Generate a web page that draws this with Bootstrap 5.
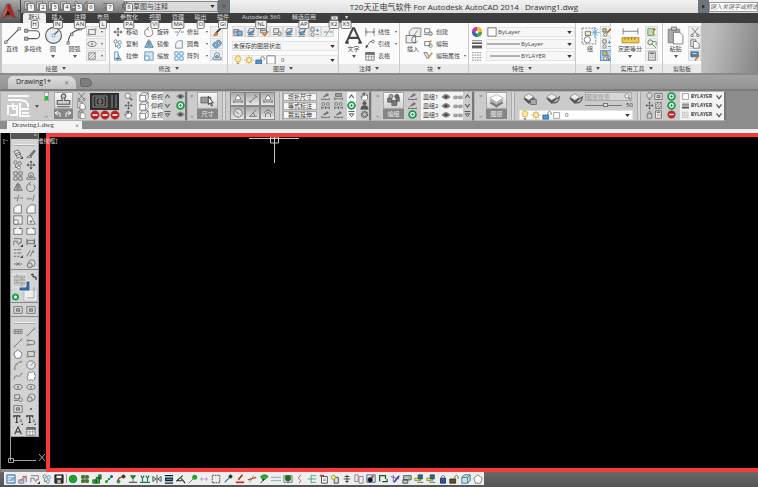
<!DOCTYPE html>
<html lang="zh-CN">
<head>
<meta charset="utf-8">
<meta name="viewport" content="width=device-width, initial-scale=1">
<title>T20天正电气软件 For Autodesk AutoCAD 2014</title>
<link href="https://cdn.jsdelivr.net/npm/bootstrap@5.3.0/dist/css/bootstrap.min.css" rel="stylesheet">
<style>
body{font:6px/8px "Open Sans","Noto Sans CJK SC",sans-serif;color:#444;background:#5a5a5a;overflow:hidden}
button,a.tabx{border:0;background:none;padding:0;margin:0;color:inherit;font:inherit;text-decoration:none;white-space:nowrap}
select,input{font:inherit;color:inherit;border:0;border-radius:0;padding:0;margin:0;background-color:#fff;min-width:0}
select{appearance:none;background:#f6f6f6 url("data:image/svg+xml,%3Csvg xmlns='http://www.w3.org/2000/svg' viewBox='0 0 6 4'%3E%3Cpath d='M0 0h6L3 4z' fill='%23333'/%3E%3C/svg%3E") no-repeat right 2px center/5px 3px}
svg{flex:none;fill:none;stroke:#5c5c5c;stroke-width:.9;display:block}
.ic{width:10px;height:10px}.big{width:19px;height:19px;stroke-width:.7}.mid{width:15px;height:15px}
.caret{width:0;height:0;border:2px solid transparent;border-top:3px solid #555;border-bottom:0;flex:none}
/* title bar */
.topbar{background:#e9e9e9}
.titlebar{height:13px;background:linear-gradient(#f2f2f2,#dedede)}
.quick{width:103px;height:13px;background:linear-gradient(#b4b4b4,#777);padding-left:2px;position:relative;z-index:2}
.quick button{width:12px;height:12px;position:relative;flex:none}
.quick button.wide{width:19px}
.keytip{position:absolute;font-size:6px;line-height:7px;height:9px;padding:0 1px;min-width:8px;text-align:center;color:#333;background:#f4f4f4;border:1px solid #777;border-radius:2px;z-index:3}
.quick .keytip{left:4px;top:3px}
.space{width:94px;height:11px;font-size:7px;line-height:9px;background-color:#dadada;border:1px solid #888}
.applogo{width:21px;height:23px;background:linear-gradient(#aaa,#555);border-right:1px solid #444}
.heading{font-size:8px;line-height:12px;color:#333;white-space:pre}
.findbox{width:49px;height:10px;font-style:italic;border:1px solid #999}
.tabs{height:10px;background:#3e3e3e;color:#ddd;padding-left:2px}
.tabs .tabx{position:relative;height:10px;line-height:9px;text-align:center}
.tabs .tabx.on{background:#f0f0f0;color:#333;border-radius:2px 2px 0 0}
.tabs .keytip{left:50%;top:7px;transform:translateX(-50%)}
.w12{width:12px}.w22{width:22px}.w23{width:23px}.w24{width:24px}.w28{width:28px}.w54{width:54px}.w32{width:32px}
/* ribbon */
.ribbon{height:52px;padding-left:2px;background:linear-gradient(100deg,#c2c2c2 88%,#bdbdbd 93%,#858585);border-bottom:2px solid #8a8a8a}
.panel{height:50px;border-right:1px solid #c9c9c9;background:#fbfbfb;display:flex;flex-direction:column}
.pbody{flex:1;display:flex;padding:3px 2px 0 3px;min-height:0}
.ptitle{height:9px;background:#e9e9e9;display:flex;align-items:center;justify-content:center;gap:4px}
.bigbtn{display:flex;flex-direction:column;align-items:center;gap:1px;height:36px;line-height:7px}
.bigbtn .caret{margin-top:1px}
.stack{display:grid;grid-template-rows:repeat(3,12px);align-content:start}
.tool{display:flex;align-items:center;gap:3px;height:12px}
.tool .caret{margin-left:auto;margin-right:2px}
.caret{transform-origin:center}
.stack .caret{border-width:1px;border-top:2px solid #555;border-bottom:0}
.sq{width:13px;height:11px;background:#efefef;border:1px solid #d9d9d9;display:flex;align-items:center;justify-content:center}
.sq.on{background:#a9cdf0;border-color:#5d9fdc}
.field{height:10px;background:#f6f6f6;display:flex;align-items:center;gap:1px;border:1px solid #e4e4e4}
.field select{height:8px;flex:1;line-height:8px}
.p1{width:108px}.p2{width:118px}.p3{width:111px}.p4{width:61px}.p5{width:69px}.p6{width:107px}.p7{width:35px}.p8{width:52px}.p9{width:39px}
.c20{width:20px}.c21{width:21px}.c23{width:23px}.c30{width:30px}.c31{width:31px}.c33{width:36px}.c34{width:34px}
/* document tabs */
.doctabs{height:16px;background:linear-gradient(#a2a2a2,#939393);padding:1px 0 0 8px;border-bottom:2px solid #7b7b7b}
.doctab{width:68px;height:13px;font-size:7px;line-height:12px;background:linear-gradient(#dedede,#c2c2c2);border-radius:5px 8px 0 0;padding:0 7px 0 8px;color:#222}
.doctab button{color:#777;font-size:6px}
.plus{width:12px;height:9px;background:#7e7e7e;border:1px solid #666;border-radius:2px 6px 4px 3px}
/* classic toolbars */
.bars{height:30px;background:#8c8c8c}
.tgroup{height:30px;background:#cbcbcb;border:1px solid #b4b4b4;border-right:2px solid #777;display:flex;align-items:center;color:#333;padding-left:2px;flex:none}
.g1{width:187px}.g2{width:184px}.g3{width:103px}.g4{width:252px}
.col3{display:grid;grid-template-rows:repeat(3,9px);justify-items:center;align-items:center;height:28px}
.col3 .ic{width:9px;height:9px}
.grab{width:7px;height:28px;display:flex;flex-direction:column;justify-content:space-between;color:#666;font-size:6px;line-height:8px}
.capbox{width:21px;height:28px;text-align:center;display:flex;flex-direction:column}
.capbox .face{height:17px;background:linear-gradient(#fafafa,#d2d2d2);border:1px solid #aaa;display:flex;justify-content:center;align-items:center}
.capbox .cap{height:10px;line-height:9px;background:#858585;color:#eee;display:flex;justify-content:center;align-items:center}
.list{background:#f3f3f3;height:28px;display:grid;grid-template-rows:repeat(3,9px);align-items:center}
.list .li{display:flex;gap:2px;align-items:center;height:9px;padding-left:2px}
.sep{width:4px;height:28px;border-left:1px solid #aaa;border-right:1px solid #aaa;background:#d8d8d8}
.dimgrid{display:grid;grid-template-columns:repeat(3,15px);grid-template-rows:14px 14px}
.dimgrid button{background:linear-gradient(#aaa,#e8e8e8);border:1px solid #888;display:flex;align-items:center;justify-content:center}
.wordbtn{width:34px;height:8px;background:#f6f6f6;border:1px solid #aaa;line-height:6px}
.panelblack{width:29px;height:17px;background:#303030;stroke:#999}
.brand{width:24px;height:24px;stroke:#fafafa;stroke-width:2}
.rewind{width:18px;height:8px;stroke:#fff}
.mono{font:bold 5px/8px "Liberation Mono",monospace}
.search{width:47px;height:9px;background:#d6d6d6;border:1px solid #aaa;color:#888}
.search input{width:34px;height:7px;background:transparent}
.search input::placeholder{color:#999;opacity:1}
.findbox::placeholder{color:#666;opacity:1}
input[type=range]{width:37px;height:6px;appearance:none;background:linear-gradient(#777,#777) center/100% 1px no-repeat}
input[type=range]::-webkit-slider-thumb{appearance:none;width:5px;height:4px;background:#ddd;border:1px solid #777}
.strip{height:12px;background:linear-gradient(#8c8c8c 66%,#e8e8e8 66%,#f8f8f8);padding-left:7px}
.strip .sheet{width:75px;height:10px;background:#f3f3f3;color:#333;font:7px/9px "Liberation Serif",serif;padding:0 3px 0 5px}
/* drawing area */
.work{background:#000;border-left:1px solid #777;position:relative;min-height:0}
.side{width:45px;border-bottom:3px solid #8a8a8a}
.frame{border:4px solid #f93a3a;border-right:0;min-width:0}
.viewlabel{position:absolute;left:2px;top:4px;color:#ddd;white-space:nowrap;line-height:9px;gap:29px}
.palette{position:relative;z-index:2;width:29px;margin-left:9px;background:#d3d3d3;border:1px solid #999;border-top:0}
.palhead{height:6px;background:#555;color:#ddd;text-align:right;line-height:5px;padding-right:1px}
.grip{height:9px;padding-top:5px}
.grip i{display:block;height:2px;border-top:1px solid #eee;border-bottom:1px solid #aaa;margin:0 3px}
.pgrid{display:grid;grid-template-columns:13px 13px;grid-auto-rows:11px;justify-content:center;align-items:center;justify-items:center}
.swatch{height:34px;border-top:1px solid #888;border-bottom:1px solid #888}
.modes{height:14px;border-bottom:1px solid #888;padding-top:1px}
.ucs{width:38px;height:30px;margin-left:7px;stroke:#ccc}
.cross{width:52px;height:28px;margin-left:199px;stroke:#ddd}
/* bottom toolbar */
.foot{height:15px;background:linear-gradient(#686868,#555);padding:0 0 2px 4px}
.footbar{background:#eee;height:13px;width:480px;padding-left:1px}
.footbar button{width:12px;height:12px;display:flex;justify-content:center;align-items:center}
.footbar .fsep{width:2px;height:9px;border-left:1px solid #999;margin:0 0 0 1px}
</style>
<script src="https://cdn.jsdelivr.net/npm/bootstrap@5.3.0/dist/js/bootstrap.bundle.min.js"></script>
</head>
<body class="d-flex flex-column vh-100 m-0">
<svg width="0" height="0" class="position-absolute" aria-hidden="true">
<defs>
<symbol id="line" viewBox="0 0 12 12"><path d="M2 10 10 2"/><path d="M1 9.500h1.500v1.500H1zM9.500 1H11v1.500H9.500z" fill="#fff" stroke-width=".5"/></symbol>
<symbol id="pline" viewBox="0 0 12 12"><path d="M2 3h6a2.500 2.500 0 0 1 0 5H3"/><path d="M1 2h2v2H1zM1 7h2v2H1z" fill="#bbb" stroke-width=".5"/></symbol>
<symbol id="circle" viewBox="0 0 12 12"><circle cx="6" cy="6" r="5" fill="#e6e9ee"/><path d="m6 6 3-3"/><path d="M5.200 5.200h1.600v1.600H5.200z" fill="#fff" stroke="#39c" stroke-width=".4"/></symbol>
<symbol id="arc" viewBox="0 0 12 12"><path d="M2 11c0-5 3-8 8-9"/><path d="M1.200 10h1.600v1.600H1.200zM3.500 4.500h1.600v1.600H3.500zM9 1h1.600v1.600H9z" fill="#ccc" stroke-width=".4"/></symbol>
<symbol id="rect" viewBox="0 0 12 12"><path d="M2 3h8v6H2z"/><path d="M1 8h2v2H1zM9 2h2v2H9z" fill="#ddd" stroke-width=".5"/></symbol>
<symbol id="ell" viewBox="0 0 12 12"><ellipse cx="6" cy="6" rx="5" ry="3"/><path d="M6 5v3M5 6h2"/></symbol>
<symbol id="hatch" viewBox="0 0 12 12"><path d="M2 2h8v8H2zM2 6l4-4M2 10l8-8M6 10l4-4" stroke-width=".7"/></symbol>
<symbol id="move" viewBox="0 0 12 12"><path d="M6 1v10M1 6h10"/><path d="m4 3 2-2 2 2zM4 9l2 2 2-2zM3 4 1 6l2 2zM9 4l2 2-2 2z" fill="#444" stroke="none"/></symbol>
<symbol id="copy" viewBox="0 0 12 12"><circle cx="3" cy="3" r="2"/><circle cx="8" cy="4" r="2" stroke="#38a"/><circle cx="7" cy="9" r="2" stroke="#38a"/><path d="M3 6v3h2"/></symbol>
<symbol id="copyg" viewBox="0 0 12 12"><circle cx="3" cy="3" r="2"/><circle cx="8" cy="4" r="2"/><circle cx="7" cy="9" r="2" fill="#eee"/><path d="M3 6v3h2"/></symbol>
<symbol id="stretch" viewBox="0 0 12 12"><path d="M2 1h4v10H2zM6 4l4 7H6" stroke="#2b7ab8"/><path d="M3 9h5" stroke-width="1.500"/></symbol>
<symbol id="stretchg" viewBox="0 0 12 12"><path d="M2 1h4l5 10H2z" fill="#f5f5f5"/><path d="M4 8h4M6 6v4"/></symbol>
<symbol id="rotate" viewBox="0 0 12 12"><path d="M4 2a5 5 0 1 0 5 1M6 0 3.500 2 6 4"/></symbol>
<symbol id="mirror" viewBox="0 0 12 12"><path d="M5 2v8H1zM7 2v8h4z" fill="#9cf" stroke="#367"/><path d="M6 0v12" stroke-width=".6"/></symbol>
<symbol id="mirrorg" viewBox="0 0 12 12"><path d="M5 2v8H1zM7 2v8h4z" fill="#bbb"/><path d="M6 0v12" stroke-width=".6"/></symbol>
<symbol id="scale" viewBox="0 0 12 12"><path d="M1 1h10v10H1z" fill="#cfe4f6" stroke="#48a"/><path d="M1 6h5v5H1z" fill="#fff" stroke="#48a"/></symbol>
<symbol id="scaleg" viewBox="0 0 12 12"><path d="M1 1h10v10H1z" fill="#e8e8e8"/><path d="M1 6h5v5H1z" fill="#fff"/></symbol>
<symbol id="trim" viewBox="0 0 12 12"><path d="M1 6h4M8 6h4" stroke-width=".8"/><path d="M9 1 3 11" stroke="#3a8fd0"/></symbol>
<symbol id="trimg" viewBox="0 0 12 12"><path d="M1 6h4M8 6h4M7 2 5 10"/></symbol>
<symbol id="fillet" viewBox="0 0 12 12"><path d="M2 11V7c0-4 3-5 8-5v9z" fill="#f3f6fa" stroke="#579"/></symbol>
<symbol id="filletg" viewBox="0 0 12 12"><path d="M1 11V7c0-4 3-6 9-6v10z" fill="#f6f6f6"/></symbol>
<symbol id="array" viewBox="0 0 12 12"><path d="M1 1h4v4H1zM7 1h4v4H7zM1 7h4v4H1zM7 7h4v4H7z" stroke="#2b7fc0"/></symbol>
<symbol id="arrayg" viewBox="0 0 12 12"><path d="M1 1h4v4H1zM7 1h4v4H7zM1 7h4v4H1zM7 7h4v4H7z"/></symbol>
<symbol id="brush" viewBox="0 0 12 12"><path d="m11 1-6 6" stroke="#333" stroke-width="2"/><path d="M5 6 2 10h4l1-2z" fill="#e78a2a" stroke="#a52"/></symbol>
<symbol id="blob" viewBox="0 0 12 12"><path d="M1 7c0-3 3-2 4-4s5-2 6 1-2 4-4 6-6 0-6-3z" fill="#7cb9ea" stroke="#2d77b5"/><circle cx="4.500" cy="7" r="1.500" fill="#fff"/><circle cx="8" cy="5" r="1.500" fill="#fff"/></symbol>
<symbol id="offset" viewBox="0 0 12 12"><path d="M1 10h10V8c-2 0-2-1-2-3a3 3 0 0 0-6 0c0 2 0 3-2 3z" stroke="#2d77b5"/><path d="M4 8c1-4 3-4 4 0z" fill="#aaa"/></symbol>
<symbol id="offsetg" viewBox="0 0 12 12"><path d="M1 10h10V8c-2 0-2-1-2-3a3 3 0 0 0-6 0c0 2 0 3-2 3z"/><path d="M4 8c1-4 3-4 4 0z" fill="#aaa"/></symbol>
<symbol id="layer" viewBox="0 0 12 12"><path d="M4 2h6l-2 5H2zM3 9h7M2 11h7" fill="#eee"/><path d="m4 6 6-2-1 3-6 2z" fill="#4a9ad4" stroke="#368" stroke-width=".5"/></symbol>
<symbol id="layer2" viewBox="0 0 12 12"><path d="M1 3h6v7H1zM1 5h6M1 7h6" fill="#eee"/><path d="M5 5h6v5H5z" fill="#77b3df" stroke="#368"/></symbol>
<symbol id="layer3" viewBox="0 0 12 12"><path d="M2 2h7v5H2zM2 4h7" fill="#ddd"/><path d="m4 8 3 2 4-5" stroke="#d9772e" stroke-width="2"/></symbol>
<symbol id="bulb" viewBox="0 0 12 12"><path d="M4 8C1 5 3 1 6 1s5 4 2 7z" fill="#ffe88a" stroke="#a88a30" stroke-width=".7"/><path d="M4.500 10h3M5 11.500h2"/></symbol>
<symbol id="bulbg" viewBox="0 0 12 12"><path d="M4 8C1 5 3 1 6 1s5 4 2 7z" fill="#ddd"/><path d="M4.500 10h3"/></symbol>
<symbol id="sun" viewBox="0 0 12 12"><path d="M6 0v12M0 6h12M2 2l8 8M10 2l-8 8" stroke="#e3a02f" stroke-width=".8"/><circle cx="6" cy="6" r="3" fill="#fff2a8" stroke="#a87a20" stroke-width=".7"/></symbol>
<symbol id="unlock" viewBox="0 0 12 12"><path d="M1 6h7v5H1z" fill="#4f97cf" stroke="#27618f"/><path d="M7 6V3q2-3 4 0v3"/></symbol>
<symbol id="unlocky" viewBox="0 0 12 12"><path d="M1 6h7v5H1z" fill="#5b5520" stroke="#221"/><path d="M7 6V3q2-3 4 0v3" stroke="#553"/></symbol>
<symbol id="lock" viewBox="0 0 12 12"><path d="M3 5h6v6H3z" fill="#2456b0" stroke="#123"/><path d="M4 5V3q2-3 4 0v2"/></symbol>
<symbol id="lockg" viewBox="0 0 12 12"><path d="M3 5h6v6H3z" fill="#ccc"/><path d="M4 5V3q2-3 4 0v2"/></symbol>
<symbol id="white" viewBox="0 0 12 12"><path d="M1 1h10v10H1z" fill="#fff"/></symbol>
<symbol id="lettera" viewBox="0 0 16 16"><path d="M2 14 7.500 2h1L14 14M4 10h8M1 14h3M12 14h3" stroke-width="1.700" stroke="#444"/></symbol>
<symbol id="dim" viewBox="0 0 12 12"><path d="M1 1v10M11 1v10M1 6h10M3 4.500 1 6l2 1.500M9 4.500 11 6 9 7.500" stroke-width=".8"/></symbol>
<symbol id="leader" viewBox="0 0 12 12"><path d="m1 11 5-8h2" /><circle cx="9.500" cy="3" r="1.700"/><path d="m1 11 0-4 3 2z" fill="#444" stroke="none"/></symbol>
<symbol id="table" viewBox="0 0 12 12"><path d="M1 2h10v9H1z" fill="#fff"/><path d="M1 2h10v2H1z" fill="#678"/><path d="M1 7h10M4.500 4v7M8 4v7" stroke-width=".6"/></symbol>
<symbol id="insert" viewBox="0 0 18 18"><path d="M2 9h9v7H2zM5 9V5l3-3h8v8h-5" fill="#eee"/><path d="M11 10a3 3 0 1 0 2 4"/><path d="m13 4-5 7" stroke="#37a"/></symbol>
<symbol id="blk" viewBox="0 0 12 12"><path d="M2 2h6v5H2zM1 9h5"/><circle cx="9" cy="8" r="2.200" fill="#d5dde4"/></symbol>
<symbol id="blk2" viewBox="0 0 12 12"><path d="M2 3h6v5H2z"/><circle cx="9" cy="8" r="2"/><path d="m8 4 2-2" stroke="#e59a20" stroke-width="2"/></symbol>
<symbol id="blk3" viewBox="0 0 12 12"><path d="M1 2h4l2 5-2 2z" fill="#eee"/><path d="m6 9 5-7" stroke="#c8a05d" stroke-width="2"/></symbol>
<symbol id="wheel" viewBox="0 0 12 12"><g stroke="none"><circle cx="6" cy="6" r="6" fill="#d33"/><path d="M6 6 6 0A6 6 0 0 1 12 6z" fill="#f3c022"/><path d="M6 6h6a6 6 0 0 1-6 6z" fill="#4a4"/><path d="M6 6v6A6 6 0 0 1 0 6z" fill="#36c"/><path d="M6 6H0A6 6 0 0 1 6 0z" fill="#c3b"/><circle cx="6" cy="6" r="1.800" fill="#fff"/></g></symbol>
<symbol id="weights" viewBox="0 0 12 12"><path d="M0 2h12"/><path d="M0 5h12" stroke-width="2"/><path d="M0 9.500h12" stroke-width="3.500"/></symbol>
<symbol id="dashes" viewBox="0 0 12 12"><path d="M0 2h12M0 5h12M0 8h12M0 11h12" stroke-dasharray="2 1" stroke-width=".8"/></symbol>
<symbol id="group" viewBox="0 0 18 18"><path d="M1 2h13v15H1z" stroke-dasharray="2 1"/><path d="M4 5h5v4H4z" fill="#e3edaa"/><circle cx="6" cy="13" r="3" fill="#fff"/><path d="M13 1v10M9 6h9M10 3l6 6M16 3l-6 6" stroke="#4aa5dd"/></symbol>
<symbol id="gedit" viewBox="0 0 12 12"><path d="M1 2h4v4H1z" fill="#bcd970"/><circle cx="4" cy="9" r="2"/><path d="m6 7 5-5" stroke="#b5651d" stroke-width="2"/></symbol>
<symbol id="ungroup" viewBox="0 0 12 12"><path d="M1 1h4v4H1z"/><circle cx="3" cy="9" r="2"/><path d="M9 2v4M7 4h4M7 9h4" stroke="#38b"/></symbol>
<symbol id="gsel" viewBox="0 0 12 12"><path d="M1 1h5v4H1z" fill="#e3d44c"/><circle cx="4" cy="9" r="2" fill="#fff"/><path d="m7 5 4 4-2 .4L8 11z" fill="#fff"/></symbol>
<symbol id="measure" viewBox="0 0 18 18"><path d="M2 2v6M16 2v6M2 5h14"/><path d="M1 11h16v5H1z" fill="#f3c747" stroke="#a17a16"/><path d="M4 11v2M7 11v2M10 11v2M13 11v2" stroke-width=".7"/></symbol>
<symbol id="pick" viewBox="0 0 12 12"><path d="M1 2h7v8H1z" fill="#bfe3b3" stroke="#3b8a3b"/><path d="m5 5 5 5M9 1v4M7 3h4" stroke="#c63"/></symbol>
<symbol id="filter" viewBox="0 0 12 12"><circle cx="4" cy="4" r="3" fill="#d9ecd0"/><path d="m6 6 5 5M7 3h4v5" stroke="#3a8a3a"/></symbol>
<symbol id="calc" viewBox="0 0 12 12"><path d="M2 1h8v10H2z" fill="#eee"/><path d="M3.500 3h5" stroke-width="1.500"/><path d="M4 6h5M4 8h5" stroke-dasharray="1 1"/></symbol>
<symbol id="paste" viewBox="0 0 18 18"><path d="M2 3h11v13H2z" fill="#aaa" stroke="#777"/><path d="M5 1h5v3H5z" fill="#ccc"/><path d="M7 6h6l3 3v8H7z" fill="#fff"/></symbol>
<symbol id="cut" viewBox="0 0 12 12"><path d="m2 1 7 8M10 1 3 9"/><circle cx="2.500" cy="10" r="1.500"/><circle cx="9.500" cy="10" r="1.500"/></symbol>
<symbol id="copy2" viewBox="0 0 12 12"><path d="M1 1h6v8H1z" fill="#eee"/><path d="M4 3h4l3 3v5H4z" fill="#fff"/></symbol>
<symbol id="match" viewBox="0 0 12 12"><path d="M1 1h9v6H1z" fill="#3f86c3"/><path d="M3 3h5" stroke="#fff"/><path d="m11 5-5 6" stroke="#c7792b" stroke-width="2"/></symbol>
<symbol id="doc" viewBox="0 0 12 12"><path d="M2 1h7v9H2z" fill="#eee"/><path d="M4 3h7v8H4z" fill="#ddd"/></symbol>
<symbol id="sheets" viewBox="0 0 12 12"><path d="m1 3 5-2 3 5-5 2zM3 6l5-2 2 5-5 2z" fill="#ddd"/><path d="M12 9v3H9z" fill="#222"/></symbol>
<symbol id="eye" viewBox="0 0 12 12"><path d="M1 6q5-6 10 0-5 5-10 0z" fill="#888" stroke="#777"/><circle cx="6" cy="6" r="1.600" fill="#333"/></symbol>
<symbol id="go" viewBox="0 0 12 12"><circle cx="6" cy="6" r="4.500" fill="#fff" stroke="#1d9a4c" stroke-width="2.500"/><path d="M6 4v4M4 6h4" stroke="#0d7836"/></symbol>
<symbol id="stop" viewBox="0 0 12 12"><circle cx="6" cy="6" r="5" fill="#c51919" stroke="#a05050"/><path d="M3 6h6" stroke="#fff" stroke-width="2"/></symbol>
<symbol id="stamp" viewBox="0 0 12 12"><circle cx="6" cy="2.500" r="1.800" fill="#ccc"/><path d="M5 4v2H1v3h10V6H7V4M1 11h10" fill="#ccc"/></symbol>
<symbol id="cube" viewBox="0 0 12 12"><path d="m1 4 3-3h7v7l-3 3H1z" fill="#fff"/><path d="M1 4h7v7M8 4l3-3" /></symbol>
<symbol id="cubeb" viewBox="0 0 12 12"><path d="m1 4 3-3h7v7l-3 3H1z" fill="#bfe8ee" stroke="#356"/><path d="M1 4h7v7M8 4l3-3" stroke="#356"/></symbol>
<symbol id="up" viewBox="0 0 12 12"><path d="m3 8 3-4 3 4" stroke-width="1.500"/></symbol>
<symbol id="down" viewBox="0 0 12 12"><path d="m3 4 3 4 3-4" stroke-width="1.500"/></symbol>
<symbol id="more" viewBox="0 0 12 12"><path d="M2 2h8M3 5h6L6 9z" stroke-width="1.300"/></symbol>
<symbol id="zoom" viewBox="0 0 12 12"><circle cx="5" cy="5" r="3.500" fill="#eee"/><path d="m8 8 3 3" stroke-width="2"/></symbol>
<symbol id="hand" viewBox="0 0 12 12"><path d="M3 10 1 6l2 1V2h1.500v3V1H6v4-3h2v3l2-1v5l-2 2H4z" fill="#fff"/></symbol>
<symbol id="cursor" viewBox="0 0 18 14"><path d="M1 3h12v7H1z" fill="#999"/><path d="m10 2 6 8-3-.3L15 13l-1.500.500L12 10l-2 2z" fill="#fff" stroke="#222"/></symbol>
<symbol id="stack" viewBox="0 0 18 18"><path d="m1 12 8-4 8 4-8 5z" fill="#777" stroke="#888"/><path d="m1 9 8-4 8 4-8 5z" fill="#bbb" stroke="#999"/><path d="m1 6 8-4 8 4-8 5z" fill="#fff" stroke="#aaa"/></symbol>
<symbol id="stk2" viewBox="0 0 18 18"><path d="m1 8 6-4 6 4-6 6z" fill="#555"/><path d="m1 6 6-4 6 4-6 4z" fill="#eee" stroke="#888"/><path d="M9 9h7v6H9z" fill="#aaa"/><path d="M11 9V7h3v2"/></symbol>
<symbol id="stk3" viewBox="0 0 18 18"><path d="m1 8 6-4 6 4-6 6z" fill="#555"/><path d="m1 6 6-4 6 4-6 4z" fill="#eee" stroke="#888"/><path d="M8 13q7 1 8-7l-3 2" stroke-width="1.500"/></symbol>
<symbol id="blocks" viewBox="0 0 18 18"><path d="M2 6h5v5H2zM7 9h6v6H7zM12 5h4v5h-4z" fill="#777"/><circle cx="6" cy="4" r="2.500" fill="#aaa"/><circle cx="13" cy="4" r="2.500" fill="#666"/></symbol>
<symbol id="dimA" viewBox="0 0 12 12"><path d="M1 7v4M11 7v4M1 9.500h10"/><path d="M3 7V5l3-4 3 4v2z" fill="#fff"/></symbol>
<symbol id="dimB" viewBox="0 0 12 12"><path d="m2 10 8-7M1 8l3 3M8 1l3 3"/></symbol>
<symbol id="dimC" viewBox="0 0 12 12"><circle cx="6" cy="6" r="5" fill="#ddd"/><path d="m3 4 4 3"/></symbol>
<symbol id="dimD" viewBox="0 0 12 12"><path d="M10 2 2 10h9M6 6q2 1 2 4"/></symbol>
<symbol id="dimE" viewBox="0 0 12 12"><path d="M1 6q5-7 10 0M3 11V7q3-3 6 0v4"/></symbol>
<symbol id="tl1" viewBox="0 0 12 12"><path d="M1 10h10M1 8v3M6 9v2M11 8v3M3 7l5-5 2 2z" fill="#777"/></symbol>
<symbol id="tl2" viewBox="0 0 12 12"><path d="M2 2h8v4H2zM0 9h12M1 7v4M11 7v4" fill="#999"/></symbol>
<symbol id="tl3" viewBox="0 0 12 12"><circle cx="3" cy="4" r="2" fill="#ccc"/><circle cx="9" cy="4" r="2" fill="#ccc"/><path d="M0 9h12M1 7v4M6 7v4M11 7v4"/></symbol>
<symbol id="man" viewBox="0 0 12 12"><circle cx="6" cy="3" r="2.200" fill="#555"/><path d="M1 11q0-5 5-5t5 5z" fill="#555"/></symbol>
<symbol id="gear" viewBox="0 0 12 12"><circle cx="6" cy="6" r="4" stroke-width="2" stroke-dasharray="2 1"/><circle cx="6" cy="6" r="2.500" fill="#ccc"/></symbol>
<symbol id="erase" viewBox="0 0 12 12"><path d="m10 1-6 7 2 1 5-6z" fill="#777"/><path d="M1 10h6l-3-2z" fill="#fff"/></symbol>
<symbol id="chamf" viewBox="0 0 12 12"><path d="M1 11V6l4-5h6v10z" fill="#f5f5f5"/></symbol>
<symbol id="extend" viewBox="0 0 12 12"><path d="M1 7h6M10 2 8 10"/></symbol>
<symbol id="brk" viewBox="0 0 12 12"><path d="M1 3h10v7H1z" fill="#f5f5f5"/><path d="M4 3h3" stroke="#fff"/><path d="M9 2v2"/></symbol>
<symbol id="flag" viewBox="0 0 12 12"><path d="M1 2h9v5H7v3M1 10V5h4v3"/><path d="M12 9v3H9z" fill="#111"/></symbol>
<symbol id="flag2" viewBox="0 0 12 12"><path d="M1 2v8M2 4h8v4H2zM10 2v7"/><path d="M12 9v3H9z" fill="#111"/></symbol>
<symbol id="bars3" viewBox="0 0 12 12"><path d="M1 2h3M5 2h5M1 6h3M5 6h5M1 10h3M5 10h3"/><path d="M12 9v3H9z" fill="#111"/></symbol>
<symbol id="para" viewBox="0 0 12 12"><path d="m1 10 4-7M5 10l4-8M7 5h3"/></symbol>
<symbol id="join" viewBox="0 0 12 12"><path d="M1 6h10M4 4l2 2-2 2M8 4 6 6l2 2" stroke-width=".8"/></symbol>
<symbol id="hat" viewBox="0 0 12 12"><path d="M1 3h10v5H1zM1 5.500h10M3 3v5M5 3v5M7 3v5M9 3v5" stroke-width=".6"/></symbol>
<symbol id="penta" viewBox="0 0 12 12"><path d="m6 1 5 4-2 6H3L1 5z" fill="#fff"/></symbol>
<symbol id="cloud" viewBox="0 0 12 12"><path d="M3 5a2 2 0 1 1 3-3 2 2 0 1 1 4 2 2 2 0 1 1 0 4 2 2 0 1 1-4 2 2 2 0 1 1-4-2q-2-2 1-3z" fill="#fff"/></symbol>
<symbol id="ring" viewBox="0 0 12 12"><circle cx="7" cy="5" r="4" fill="#ddd"/><circle cx="4.500" cy="7.500" r="3" fill="#ccc"/></symbol>
<symbol id="spline" viewBox="0 0 12 12"><path d="M1 10C4 0 6 12 11 2"/></symbol>
<symbol id="dot" viewBox="0 0 12 12"><circle cx="6" cy="6" r=".8" fill="#333"/></symbol>
<symbol id="tt" viewBox="0 0 12 12"><path d="M1 3V1h7v2M4.500 1v8M3 9h3" stroke="#333" stroke-width="1.400"/><path d="M8 6h3M8 8h3M12 10v2h-2z" fill="#222"/></symbol>
<symbol id="aa" viewBox="0 0 12 12"><path d="m2 10 4-9 4 9M3.500 7h5" stroke="#444" stroke-width="1.400"/></symbol>
<symbol id="hframe" viewBox="0 0 12 12"><path d="M1 2h10v8H1z" fill="#ddd"/><path d="M4 4.500h4v3H4z" fill="#aaa"/></symbol>
<symbol id="gball" viewBox="0 0 12 12"><circle cx="6" cy="6" r="4.500" fill="#12b512" stroke="#064"/><path d="m4 4 4 4M8 4 4 8"/></symbol>
<symbol id="ggrid" viewBox="0 0 12 12"><path d="M2 2h3v3H2zM7 2h3v3H7zM2 7h3v3H2zM7 7h3v3H7z" fill="#1bb31b" stroke="#141"/><path d="M6 1v10" stroke="#a22"/></symbol>
<symbol id="gstep" viewBox="0 0 12 12"><path d="M1 7h4v4H1zM5 4h4v7H5zM8 1h3v5H8z" fill="#2bb32b" stroke="#142"/></symbol>
<symbol id="gline" viewBox="0 0 12 12"><path d="m2 10 8-8" stroke="#36c"/><circle cx="3" cy="9" r="1.800" fill="#15a515" stroke="none"/><circle cx="9" cy="3" r="1.800" fill="#25c" stroke="none"/><circle cx="6" cy="6" r="1.500" fill="#15a515" stroke="none"/></symbol>
<symbol id="garc" viewBox="0 0 12 12"><path d="M2 10q0-7 8-7" stroke="#b22" stroke-width="1.500"/><circle cx="9" cy="3" r="2" fill="#141"/><circle cx="3" cy="9" r="1.800" fill="#15a515"/></symbol>
<symbol id="gtee" viewBox="0 0 12 12"><path d="M1 10h10" stroke-width="1.500"/><path d="M3 2h6L6 6z" fill="#1a1" stroke="#151"/><path d="M6 5v5"/></symbol>
<symbol id="gyy" viewBox="0 0 12 12"><path d="m1 2 2 3 2-3M3 5v4M7 2l2 3 2-3M9 5v4M0 10h12" stroke="#175" stroke-width="1.300"/></symbol>
<symbol id="gmir" viewBox="0 0 12 12"><path d="M6 1v10" stroke="#222"/><path d="m1 3 4 3-4 3zM11 3 7 6l4 3z" fill="#cdc" stroke="#143"/></symbol>
<symbol id="gbus" viewBox="0 0 12 12"><path d="M1 2h10M2 5h8v3H2zM1 11h10" fill="#49c" stroke-width="1.500" stroke="#123"/></symbol>
<symbol id="gang" viewBox="0 0 12 12"><path d="M8 2 1 8h6M6 5l5 6" stroke="#222" stroke-width="1.300"/><path d="m5 4 3 3" stroke="#1a1" stroke-width="1.500"/></symbol>
<symbol id="gpin" viewBox="0 0 12 12"><path d="m1 11 6-6" stroke="#368"/><circle cx="8" cy="4" r="3" fill="#27a527" stroke="none"/></symbol>
<symbol id="gdim" viewBox="0 0 12 12"><path d="M1 6h10M3 4v4M9 4v4" stroke="#a8c"/></symbol>
<symbol id="glass" viewBox="0 0 12 12"><path d="M1 5h4v3H1zM7 5h4v3H7zM5 6h2" fill="#aaa" stroke="#888"/></symbol>
<symbol id="gbox" viewBox="0 0 12 12"><path d="M1.500 1.500h9v9h-9z" stroke-dasharray="2 1" stroke="#111"/></symbol>
<symbol id="gtool" viewBox="0 0 12 12"><path d="m2 10 8-8" stroke="#1a8a7a" stroke-width="1.500"/><circle cx="9" cy="3" r="2" fill="#222"/></symbol>
<symbol id="gred" viewBox="0 0 12 12"><path d="M1 10h10" stroke="#d22" stroke-width="2"/><path d="m4 7 5-6" stroke="#a31" stroke-width="2"/></symbol>
<symbol id="gx" viewBox="0 0 12 12"><path d="m1 7 10-3" stroke="#d33" stroke-width="1.500"/><path d="m3 10 5-8" stroke="#2a2"/></symbol>
<symbol id="gleaf" viewBox="0 0 12 12"><path d="M2 3q5-4 9 0L5 8z" fill="#1fb51f" stroke="#163"/><path d="m2 11 4-5" stroke="#114"/></symbol>
<symbol id="gpar" viewBox="0 0 12 12"><path d="M0 4h12M0 8h12" stroke="#59a"/></symbol>
<symbol id="gtree" viewBox="0 0 12 12"><path d="M1 2h10v8H1z"/><circle cx="6" cy="5" r="3.500" fill="#171"/><path d="M6 6v5"/></symbol>
<symbol id="gzig" viewBox="0 0 12 12"><path d="m7 1-3 4 3 3-2 3" stroke="#b33"/></symbol>
<symbol id="gfork" viewBox="0 0 12 12"><path d="M5 1v10M1 6h4M5 2h6M5 6h6M5 10h6" stroke="#289a6a"/></symbol>
<symbol id="gsheet" viewBox="0 0 12 12"><path d="M3 3h7v8H3z" fill="#fff" stroke="#222"/><path d="M1 2h5" stroke="#c33" stroke-width="2"/><path d="M5 6h3M5 8h3"/></symbol>
<symbol id="gbulb" viewBox="0 0 12 12"><path d="M5 4h5v7H5z" fill="#ddd" stroke="#222"/><circle cx="4" cy="4" r="2.500" fill="#ff4" stroke="#885"/></symbol>
<symbol id="gpole" viewBox="0 0 12 12"><path d="M6 1v10M3 3h6M2 6h8M4 9h4" stroke="#222"/></symbol>
<symbol id="gpages" viewBox="0 0 12 12"><path d="M1 1h4v8H1zM6 3h5v8H6z" stroke="#867"/></symbol>
<symbol id="gpic" viewBox="0 0 12 12"><path d="M1 1h10v9H1z" fill="#def" stroke="#248"/><circle cx="5" cy="7" r="3" fill="#111"/><circle cx="8" cy="3" r="1.500" fill="#d33" stroke="none"/></symbol>
<symbol id="gcyc" viewBox="0 0 12 12"><path d="M2 9V2h7v4M5 9h6V6" stroke="#175c28" stroke-width="1.500"/></symbol>
<symbol id="gpen" viewBox="0 0 12 12"><path d="m1 3 10 3M4 1v9" stroke="#63b"/><path d="m5 10 6-8" stroke="#348" stroke-width="2"/></symbol>
<symbol id="gblk" viewBox="0 0 12 12"><path d="M2 2h9v5H2zM1 7h6v4H1z" fill="#bcc" stroke="#233"/><path d="m5 8 5-5" stroke="#774"/></symbol>
<symbol id="gcar" viewBox="0 0 12 12"><path d="M1 5h7v3H1z" fill="#ee3" stroke="#775"/><path d="M5 1h5v5H5zM4 10h7" fill="#368" stroke="#255"/></symbol>
<symbol id="save" viewBox="0 0 12 12"><path d="M1 1h10v10H1z" fill="#333" stroke="#111"/><path d="M3 2h6v3H3z" fill="#eee" stroke="none"/><path d="M4 7h4v4H4z" fill="#bb9" stroke="none"/></symbol>
<symbol id="prop" viewBox="0 0 12 12"><path d="M1 1h10v10H1z" fill="#8fc1ea" stroke="#269"/><path d="M2 3h8M2 6h5M2 9h8" stroke="#fff"/><path d="m5 8 5-4" stroke="#d55"/></symbol>
<symbol id="lay" viewBox="0 0 12 12"><path d="M1 7h6v4H1zM5 3h5v7" fill="#bcd" stroke="#668"/><path d="m3 8 7-6" stroke="#d66" stroke-width="1.500"/></symbol>
</defs></svg>

<header class="topbar d-flex">
 <button class="applogo d-flex align-items-center" aria-label="应用程序菜单"><svg width="17" height="20" viewBox="0 0 17 20" stroke="none"><path d="M1 17 7 2h3l6 15-5-3-5 1z" fill="#c51b14"/><path d="m7 2 1 9-7 6z" fill="#f0513b"/><path d="m8 7 3 6-6 1z" fill="#430b09"/></svg><span class="caret"></span></button>
 <div class="flex-grow-1 overflow-visible">
  <div class="titlebar d-flex align-items-center">
   <div class="quick d-flex">
    <button aria-label="新建"><svg class="ic"><use href="#doc"/></svg><span class="keytip">1</span></button><button aria-label="打开"><svg class="ic"><use href="#doc"/></svg><span class="keytip">2</span></button><button aria-label="保存"><svg class="ic"><use href="#doc"/></svg><span class="keytip">3</span></button><button aria-label="另存为"><svg class="ic"><use href="#doc"/></svg><span class="keytip">4</span></button><button aria-label="打印"><svg class="ic"><use href="#stamp"/></svg><span class="keytip">5</span></button><button class="wide" aria-label="放弃"><svg class="ic"><use href="#rotate"/></svg><span class="keytip">6</span></button><button class="wide" aria-label="重做"><svg class="ic"><use href="#pline"/></svg><span class="keytip">7</span></button><button aria-label="工作空间设置"><svg class="ic"><use href="#gear"/></svg><span class="keytip">8</span></button>
   </div>
   <select class="space ps-2" aria-label="工作空间"><option>草图与注释</option></select>
   <button class="bg-secondary h-100 px-1" aria-label="自定义"><span class="caret d-block"></span></button>
   <div class="heading flex-grow-1 text-center">T20天正电气软件 For Autodesk AutoCAD 2014   Drawing1.dwg</div>
   <button class="bg-secondary h-100 px-1" aria-label="展开搜索"><svg width="3" height="5" viewBox="0 0 3 5" stroke="none"><path d="M0 0 3 2.500 0 5z" fill="#111"/></svg></button>
   <input class="findbox" aria-label="搜索" placeholder="键入关键字或短语">
  </div>
  <nav class="tabs d-flex"><a class="tabx on w23" href="#">默认<span class="keytip">H</span></a><a class="tabx w23" href="#">插入<span class="keytip">IN</span></a><a class="tabx w22" href="#">注释<span class="keytip">AN</span></a><a class="tabx w24" href="#">布局<span class="keytip">L</span></a><a class="tabx w28" href="#">参数化<span class="keytip">PA</span></a><a class="tabx w24" href="#">视图<span class="keytip">VI</span></a><a class="tabx w22" href="#">管理<span class="keytip">MA</span></a><a class="tabx w23" href="#">输出<span class="keytip">O</span></a><a class="tabx w22" href="#">插件<span class="keytip">GI</span></a><a class="tabx w54" href="#">Autodesk 360<span class="keytip">NL</span></a><a class="tabx w32" href="#">精选应用<span class="keytip">AP</span></a><a class="tabx w12 ms-2 me-0" href="#" aria-label="最小化"><svg width="12" height="10" viewBox="0 0 12 10"><path d="M3 3h7v4H3z" fill="#eee"/><path d="M5 5h3"/></svg><span class="keytip">X2</span></a><a class="tabx w12" href="#" aria-label="选项">▾<span class="keytip">X3</span></a></nav>
 </div>
</header>

<section class="ribbon d-flex">
 <div class="panel p1"><div class="pbody ps-0">
  <button class="bigbtn c20"><svg class="big"><use href="#line"/></svg>直线</button><button class="bigbtn c21"><svg class="big"><use href="#pline"/></svg>多段线</button><button class="bigbtn c20"><svg class="big"><use href="#circle"/></svg>圆<span class="caret"></span></button><button class="bigbtn c23"><svg class="big"><use href="#arc"/></svg>圆弧<span class="caret"></span></button>
  <div class="stack c20"><button class="tool sq w-100" aria-label="矩形"><svg class="ic"><use href="#rect"/></svg><span class="caret"></span></button><button class="tool sq w-100" aria-label="椭圆"><svg class="ic"><use href="#ell"/></svg><span class="caret"></span></button><button class="tool sq w-100" aria-label="图案填充"><svg class="ic"><use href="#hatch"/></svg><span class="caret"></span></button></div></div>
  <div class="ptitle">绘图<span class="caret"></span></div></div>
 <div class="panel p2"><div class="pbody">
  <div class="stack c31"><button class="tool"><svg class="ic"><use href="#move"/></svg>移动</button><button class="tool"><svg class="ic"><use href="#copy"/></svg>复制</button><button class="tool"><svg class="ic"><use href="#stretch"/></svg>拉伸</button></div>
  <div class="stack c30"><button class="tool"><svg class="ic"><use href="#rotate"/></svg>旋转</button><button class="tool"><svg class="ic"><use href="#mirror"/></svg>镜像</button><button class="tool"><svg class="ic"><use href="#scale"/></svg>缩放</button></div>
  <div class="stack c33"><button class="tool"><svg class="ic"><use href="#trim"/></svg>修剪<span class="caret"></span></button><button class="tool"><svg class="ic"><use href="#fillet"/></svg>圆角<span class="caret"></span></button><button class="tool"><svg class="ic"><use href="#array"/></svg>阵列<span class="caret"></span></button></div>
  <div class="stack"><button class="sq" aria-label="删除"><svg class="ic"><use href="#brush"/></svg></button><button class="sq" aria-label="分解"><svg class="ic"><use href="#blob"/></svg></button><button class="sq" aria-label="偏移"><svg class="ic"><use href="#offset"/></svg></button></div></div>
  <div class="ptitle">修改<span class="caret"></span></div></div>
 <div class="panel p3"><div class="pbody flex-column px-0">
  <div class="d-flex justify-content-between px-1 mb-1"><button class="sq" aria-label="图层特性"><svg class="ic"><use href="#layer2"/></svg></button><button class="sq" aria-label="置为当前"><svg class="ic"><use href="#layer"/></svg></button><button class="sq" aria-label="匹配"><svg class="ic"><use href="#layer3"/></svg></button><button class="sq" aria-label="上一个"><svg class="ic"><use href="#blk"/></svg></button><button class="sq" aria-label="隔离"><svg class="ic"><use href="#layer"/></svg></button><button class="sq" aria-label="取消隔离"><svg class="ic"><use href="#layer"/></svg></button><button class="sq" aria-label="冻结"><svg class="ic"><use href="#ungroup"/></svg></button><button class="sq" aria-label="关闭"><svg class="ic"><use href="#trim"/></svg></button></div>
  <div class="field mb-1 ms-1"><select aria-label="图层状态"><option>未保存的图层状态</option></select></div>
  <div class="field ms-1"><svg class="ic"><use href="#bulb"/></svg><svg class="ic"><use href="#sun"/></svg><svg class="ic"><use href="#unlock"/></svg><svg class="ic"><use href="#white"/></svg><select class="ps-1" aria-label="图层"><option>0</option></select></div></div>
  <div class="ptitle">图层<span class="caret"></span></div></div>
 <div class="panel p4"><div class="pbody pe-0">
  <button class="bigbtn c23"><svg class="big"><use href="#lettera"/></svg>文字<span class="caret"></span></button>
  <div class="stack c34"><button class="tool"><svg class="ic"><use href="#dim"/></svg>线性<span class="caret"></span></button><button class="tool"><svg class="ic"><use href="#leader"/></svg>引线<span class="caret"></span></button><button class="tool"><svg class="ic"><use href="#table"/></svg>表格</button></div></div>
  <div class="ptitle">注释<span class="caret"></span></div></div>
 <div class="panel p5"><div class="pbody pe-0">
  <button class="bigbtn c20"><svg class="big"><use href="#insert"/></svg>插入</button>
  <div class="stack flex-grow-1"><button class="tool"><svg class="ic"><use href="#blk"/></svg>创建</button><button class="tool"><svg class="ic"><use href="#blk2"/></svg>编辑</button><button class="tool"><svg class="ic"><use href="#blk3"/></svg>编辑属性<span class="caret"></span></button></div></div>
  <div class="ptitle">块<span class="caret"></span></div></div>
 <div class="panel p6"><div class="pbody flex-column pe-0">
  <div class="d-flex align-items-center gap-1 tool"><svg class="ic"><use href="#wheel"/></svg><div class="field flex-grow-1"><svg class="ic"><use href="#white"/></svg><select aria-label="颜色"><option>ByLayer</option></select></div></div>
  <div class="d-flex align-items-center gap-1 tool"><svg class="ic"><use href="#weights"/></svg><div class="field flex-grow-1"><svg width="33" height="4"><path d="M0 2h33"/></svg><select aria-label="线宽"><option>ByLayer</option></select></div></div>
  <div class="d-flex align-items-center gap-1 tool"><svg class="ic"><use href="#dashes"/></svg><div class="field flex-grow-1"><svg width="33" height="4"><path d="M3 2h30"/></svg><select aria-label="线型"><option>BYLAYER</option></select></div></div></div>
  <div class="ptitle">特性<span class="caret"></span></div></div>
 <div class="panel p7"><div class="pbody pe-0 ps-1"><button class="bigbtn c20 flex-shrink-0"><svg class="big"><use href="#group"/></svg>组</button><div class="stack"><button class="sq" aria-label="编组编辑"><svg class="ic"><use href="#gedit"/></svg></button><button class="sq" aria-label="取消编组"><svg class="ic"><use href="#ungroup"/></svg></button><button class="sq on" aria-label="编组选择"><svg class="ic"><use href="#gsel"/></svg></button></div></div><div class="ptitle">组<span class="caret"></span></div></div>
 <div class="panel p8"><div class="pbody pe-1 justify-content-between"><button class="bigbtn ms-1"><svg class="big"><use href="#measure"/></svg>定距等分<span class="caret"></span></button><div class="stack"><button class="sq" aria-label="选择"><svg class="ic"><use href="#pick"/></svg></button><button class="sq" aria-label="快速选择"><svg class="ic"><use href="#filter"/></svg></button><button class="sq" aria-label="计算器"><svg class="ic"><use href="#calc"/></svg></button></div></div><div class="ptitle">实用工具<span class="caret"></span></div></div>
 <div class="panel p9"><div class="pbody pe-0 justify-content-between"><button class="bigbtn"><svg class="big"><use href="#paste"/></svg>粘贴<span class="caret"></span></button><div class="stack"><button class="sq" aria-label="剪切"><svg class="ic"><use href="#cut"/></svg></button><button class="sq" aria-label="复制"><svg class="ic"><use href="#copy2"/></svg></button><button class="sq" aria-label="特性匹配"><svg class="ic"><use href="#match"/></svg></button></div></div><div class="ptitle">剪贴板</div></div>
</section>

<div class="doctabs d-flex align-items-center gap-1"><div class="doctab d-flex justify-content-between"><span>Drawing1*</span><button aria-label="关闭">✕</button></div><button class="plus" aria-label="新图形"></button></div>

<section class="bars d-flex">
 <div class="tgroup g1">
  <svg class="brand ms-1" viewBox="0 0 24 24"><path d="M1 2h21M1 6h10q11 0 10 7M1 21v-9h9v9H3M13 9v13h10M13 15h9M6 9v6h4M15 19h7"/></svg>
  <span class="caret mx-1"></span>
  <div class="grab align-items-center"><svg width="5" height="9" viewBox="0 0 5 9"><path d="M0 0h5v9H0z" fill="#eee"/><path d="M1 4h3v4H1z" fill="#1bc52a" stroke="none"/></svg><span>‹‹</span></div>
  <div class="capbox ms-1"><button class="face" aria-label="图章"><svg class="mid"><use href="#stamp"/></svg></button><span class="cap"><svg class="rewind" viewBox="0 0 18 8"><path d="M4 1 1 3l3 2M1 3h5v4M14 1l3 2-3 2M17 3h-5v4"/></svg></span></div>
  <div class="col3 mx-1"><svg class="ic"><use href="#cut"/></svg><svg class="ic"><use href="#copy2"/></svg><svg class="ic"><use href="#paste"/></svg></div>
  <div class="d-flex flex-column align-items-center"><svg class="panelblack" viewBox="0 0 29 17"><path d="M3 3h14v11H3zM6 5h8v7H6zM9 7h2v3H9zM22 2v13M26 2v13"/></svg><div class="d-flex"><svg class="ic"><use href="#stop"/></svg><svg class="ic"><use href="#stop"/></svg><svg class="ic"><use href="#stop"/></svg></div></div>
  <div class="col3 mx-1"><svg class="ic"><use href="#zoom"/></svg><svg class="ic"><use href="#move"/></svg><svg class="ic"><use href="#hand"/></svg></div>
  <div class="list"><button class="li"><svg class="ic"><use href="#cube"/></svg>俯视</button><button class="li"><svg class="ic"><use href="#cube"/></svg>仰视</button><button class="li"><svg class="ic"><use href="#cube"/></svg>左视</button></div>
  <div class="col3"><svg class="ic"><use href="#up"/></svg><svg class="ic"><use href="#down"/></svg><svg class="ic"><use href="#more"/></svg></div>
  <div class="col3 ms-1"><svg class="ic"><use href="#eye"/></svg><svg class="ic"><use href="#go"/></svg><svg class="ic"><use href="#eye"/></svg></div>
 </div>
 <div class="tgroup g2">
  <div class="grab"><span>×</span><span>‹‹</span></div>
  <div class="capbox"><button class="face" aria-label="尺寸"><svg class="mid"><use href="#cursor"/></svg></button><span class="cap">尺寸</span></div>
  <div class="sep mx-1"></div>
  <div class="dimgrid"><button aria-label="标注1"><svg class="ic"><use href="#dimA"/></svg></button><button aria-label="标注2"><svg class="ic"><use href="#dimB"/></svg></button><button aria-label="标注3"><svg class="ic"><use href="#dimA"/></svg></button><button aria-label="标注4"><svg class="ic"><use href="#dimC"/></svg></button><button aria-label="标注5"><svg class="ic"><use href="#dimD"/></svg></button><button aria-label="标注6"><svg class="ic"><use href="#dimE"/></svg></button></div>
  <div class="sep ms-1"></div>
  <div class="col3"><button class="wordbtn">增补尺寸</button><button class="wordbtn">等式标注</button><button class="wordbtn">裁剪延伸</button></div>
  <div class="col3 ms-1"><svg class="ic"><use href="#tl1"/></svg><svg class="ic"><use href="#tl3"/></svg><svg class="ic"><use href="#tl1"/></svg></div>
  <div class="col3 ms-1"><svg class="ic"><use href="#tl2"/></svg><svg class="ic"><use href="#tl3"/></svg><svg class="ic"><use href="#tl1"/></svg></div>
  <div class="col3 ms-1 bg-light"><svg class="ic"><use href="#up"/></svg><svg class="ic"><use href="#go"/></svg><svg class="ic"><use href="#more"/></svg></div>
  <div class="col3 ms-1"><svg class="ic"><use href="#hand"/></svg><svg class="ic"><use href="#man"/></svg><svg class="ic"><use href="#gear"/></svg></div>
 </div>
 <div class="tgroup g3 ps-1">
  <div class="grab"><span>×</span><span>‹‹</span></div>
  <div class="capbox"><button class="face" aria-label="编组"><svg class="mid"><use href="#blocks"/></svg></button><span class="cap">编组</span></div>
  <div class="col3 mx-1"><svg class="ic"><use href="#tl1"/></svg><svg class="ic"><use href="#tl1"/></svg><svg class="ic"><use href="#go"/></svg></div>
  <div class="list flex-grow-1"><button class="li">皿组1<svg class="ic ms-auto"><use href="#eye"/></svg><svg class="ic"><use href="#glass"/></svg></button><button class="li">皿组2<svg class="ic ms-auto"><use href="#eye"/></svg><svg class="ic"><use href="#glass"/></svg></button><button class="li">皿组3<svg class="ic ms-auto"><use href="#eye"/></svg><svg class="ic"><use href="#glass"/></svg></button></div>
  <div class="col3"><svg class="ic"><use href="#up"/></svg><svg class="ic"><use href="#down"/></svg><svg class="ic"><use href="#more"/></svg></div>
 </div>
 <div class="tgroup g4 ps-1">
  <div class="grab"><span>×</span><span>‹‹</span></div>
  <div class="capbox"><button class="face" aria-label="图层"><svg class="mid"><use href="#stack"/></svg></button><span class="cap">图层</span></div>
  <div class="sep mx-1"></div>
  <div class="flex-grow-1 d-flex flex-column justify-content-between h-100">
   <div class="d-flex justify-content-between"><div class="d-flex gap-2 ps-1"><svg class="mid"><use href="#stk2"/></svg><svg class="mid"><use href="#stk3"/></svg><svg class="mid"><use href="#stk3"/></svg></div>
    <div><div class="search d-flex"><input aria-label="图层搜索" placeholder="图层搜索"><svg width="7" height="7" class="ms-auto"><use href="#zoom"/></svg></div><div class="d-flex align-items-center gap-1"><input type="range" aria-label="淡入度" value="56">50</div></div></div>
   <div class="field bg-white"><svg class="ic"><use href="#bulb"/></svg><svg class="ic"><use href="#sun"/></svg><svg class="ic"><use href="#unlock"/></svg><svg width="7" height="7"><use href="#white"/></svg><select class="ps-1 bg-white" aria-label="当前图层"><option>0</option></select></div></div>
  <div class="sep ms-1"></div>
  <div class="col3 ms-1"><svg class="ic"><use href="#bulbg"/></svg><svg class="ic"><use href="#move"/></svg><svg class="ic"><use href="#lockg"/></svg></div>
  <div class="col3"><svg class="ic"><use href="#hframe"/></svg><svg class="ic"><use href="#hatch"/></svg><svg class="ic"><use href="#calc"/></svg></div>
  <div class="col3 mx-1"><svg class="ic"><use href="#go"/></svg><svg class="ic"><use href="#go"/></svg><svg class="ic"><use href="#stop"/></svg></div>
  <div class="list mono"><button class="li"><svg width="7" height="7"><use href="#white"/></svg>BYLAYER<svg class="ic"><use href="#down"/></svg></button><button class="li"><svg width="7" height="7"><use href="#weights"/></svg>BYLAYER<svg class="ic"><use href="#down"/></svg></button><button class="li"><svg width="7" height="7"><use href="#dashes"/></svg>BYLAYER<svg class="ic"><use href="#down"/></svg></button></div>
 </div>
</section>
<div class="strip"><div class="sheet d-flex justify-content-between"><span>Drawing1.dwg</span><button aria-label="关闭图形">×</button></div></div>

<main class="work d-flex flex-grow-1">
 <div class="side flex-shrink-0">
  <div class="palette">
   <div class="palhead">×</div><div class="grip"><i></i></div>
   <div class="pgrid"><svg class="ic"><use href="#sheets"/></svg><svg class="ic"><use href="#erase"/></svg><svg class="ic"><use href="#copyg"/></svg><svg class="ic"><use href="#move"/></svg><svg class="ic"><use href="#arrayg"/></svg><svg class="ic"><use href="#offsetg"/></svg><svg class="ic"><use href="#mirrorg"/></svg><svg class="ic"><use href="#rotate"/></svg><svg class="ic"><use href="#trimg"/></svg><svg class="ic"><use href="#extend"/></svg><svg class="ic"><use href="#filletg"/></svg><svg class="ic"><use href="#chamf"/></svg><svg class="ic"><use href="#scaleg"/></svg><svg class="ic"><use href="#stretchg"/></svg><svg class="ic"><use href="#brk"/></svg><svg class="ic"><use href="#brk"/></svg><svg class="ic"><use href="#flag"/></svg><svg class="ic"><use href="#flag2"/></svg><svg class="ic"><use href="#bars3"/></svg><svg class="ic"><use href="#para"/></svg><svg class="ic"><use href="#join"/></svg><svg class="ic"><use href="#ring"/></svg></div>
   <div class="swatch"><svg width="27" height="32" viewBox="0 0 27 32"><path d="M13 20h13v11H13z" fill="#eee" stroke="#aaa" stroke-width=".6"/><path d="M16 28h7V17" stroke="#999"/><path d="M8 11h11v10H8z" fill="#336699" stroke="#eee"/><path d="M2 4h13v13H2z" fill="#c9c9c5" stroke="#eee"/><path d="M2 7h13M2 10h13M2 13h13M6 4v3M11 7v3M6 10v3M11 13v4" stroke="#888" stroke-width=".6"/><path d="m20 5 2-1v3h3v3" stroke="#111"/><circle cx="4.500" cy="27" r="2.500" stroke="#19a050" stroke-width="2" fill="#fff"/></svg></div>
   <div class="modes"><div class="pgrid"><svg class="ic"><use href="#hframe"/></svg><svg class="ic"><use href="#hframe"/></svg></div></div>
   <div class="grip"><i></i></div>
   <div class="pgrid"><svg class="ic"><use href="#hat"/></svg><svg class="ic"><use href="#line"/></svg><svg class="ic"><use href="#line"/></svg><svg class="ic"><use href="#pline"/></svg><svg class="ic"><use href="#penta"/></svg><svg class="ic"><use href="#rect"/></svg><svg class="ic"><use href="#arc"/></svg><svg class="ic"><use href="#circle"/></svg><svg class="ic"><use href="#spline"/></svg><svg class="ic"><use href="#cloud"/></svg><svg class="ic"><use href="#ell"/></svg><svg class="ic"><use href="#ell"/></svg><svg class="ic"><use href="#blk"/></svg><svg class="ic"><use href="#ring"/></svg><svg class="ic"><use href="#hframe"/></svg><svg class="ic"><use href="#dot"/></svg><svg class="ic"><use href="#tt"/></svg><svg class="ic"><use href="#tt"/></svg><svg class="ic"><use href="#aa"/></svg><svg class="ic"><use href="#table"/></svg></div>
  </div>
  <svg class="ucs" viewBox="0 0 38 30"><path d="M2.500 0v24M5 23.500h23M.500 21.500h5v4h-5zM31 17l6 7M37 17l-6 7" stroke-width=".8"/></svg>
 </div>
 <div class="frame flex-grow-1"><svg class="cross" viewBox="0 0 52 28"><path d="M0 1.500h50M25.500 0v26M21.500 0h8v6h-8z" stroke-width=".9"/></svg></div>
 <div class="viewlabel d-flex"><span>[−</span><span>维线框]</span></div>
</main>

<footer class="foot"><div class="footbar d-flex align-items-center">
<button aria-label="特性"><svg class="ic"><use href="#prop"/></svg></button><button aria-label="图层"><svg class="ic"><use href="#lay"/></svg></button><button aria-label="标注"><svg class="ic"><use href="#flag"/></svg></button><button aria-label="复制"><svg class="ic"><use href="#copy"/></svg></button><button aria-label="保存"><svg class="ic"><use href="#save"/></svg></button><span class="fsep"></span>
<button aria-label="设备"><svg class="ic"><use href="#gball"/></svg></button><button aria-label="矩形布置"><svg class="ic"><use href="#ggrid"/></svg></button><button aria-label="扇形布置"><svg class="ic"><use href="#gstep"/></svg></button><button aria-label="两点均布"><svg class="ic"><use href="#gline"/></svg></button><button aria-label="弧线均布"><svg class="ic"><use href="#garc"/></svg></button><button aria-label="沿线均布"><svg class="ic"><use href="#gtee"/></svg></button><button aria-label="沿墙布置"><svg class="ic"><use href="#gyy"/></svg></button><button aria-label="镜像"><svg class="ic"><use href="#gmir"/></svg></button><button aria-label="母线"><svg class="ic"><use href="#gbus"/></svg></button><button aria-label="角度"><svg class="ic"><use href="#gang"/></svg></button><button aria-label="引上"><svg class="ic"><use href="#gpin"/></svg></button><button aria-label="间距"><svg class="ic"><use href="#gdim"/></svg></button><button aria-label="选框"><svg class="ic"><use href="#gbox"/></svg></button><button aria-label="连线"><svg class="ic"><use href="#gtool"/></svg></button><button aria-label="擦除"><svg class="ic"><use href="#gred"/></svg></button><button aria-label="断线"><svg class="ic"><use href="#gx"/></svg></button><button aria-label="改线"><svg class="ic"><use href="#gleaf"/></svg></button><button aria-label="平行"><svg class="ic"><use href="#gpar"/></svg></button><button aria-label="平面"><svg class="ic"><use href="#gtree"/></svg></button><button aria-label="折线"><svg class="ic"><use href="#gzig"/></svg></button><button aria-label="系统图"><svg class="ic"><use href="#gfork"/></svg></button><button aria-label="表"><svg class="ic"><use href="#gsheet"/></svg></button><button aria-label="照明"><svg class="ic"><use href="#gbulb"/></svg></button><button aria-label="杆"><svg class="ic"><use href="#gpole"/></svg></button><button aria-label="图纸"><svg class="ic"><use href="#gpages"/></svg></button><button aria-label="图库"><svg class="ic"><use href="#gpic"/></svg></button><button aria-label="循环"><svg class="ic"><use href="#gcyc"/></svg></button><button aria-label="编辑"><svg class="ic"><use href="#gpen"/></svg></button><button aria-label="图块"><svg class="ic"><use href="#gblk"/></svg></button><button aria-label="入库"><svg class="ic"><use href="#gcar"/></svg></button><button aria-label="出库"><svg class="ic"><use href="#gcar"/></svg></button><button aria-label="锁定"><svg class="ic"><use href="#lock"/></svg></button><button aria-label="解锁"><svg class="ic"><use href="#unlocky"/></svg></button><button aria-label="三维"><svg class="ic"><use href="#cubeb"/></svg></button><button aria-label="轴测"><svg class="ic"><use href="#penta"/></svg></button>
</div></footer>
</body>
</html>
